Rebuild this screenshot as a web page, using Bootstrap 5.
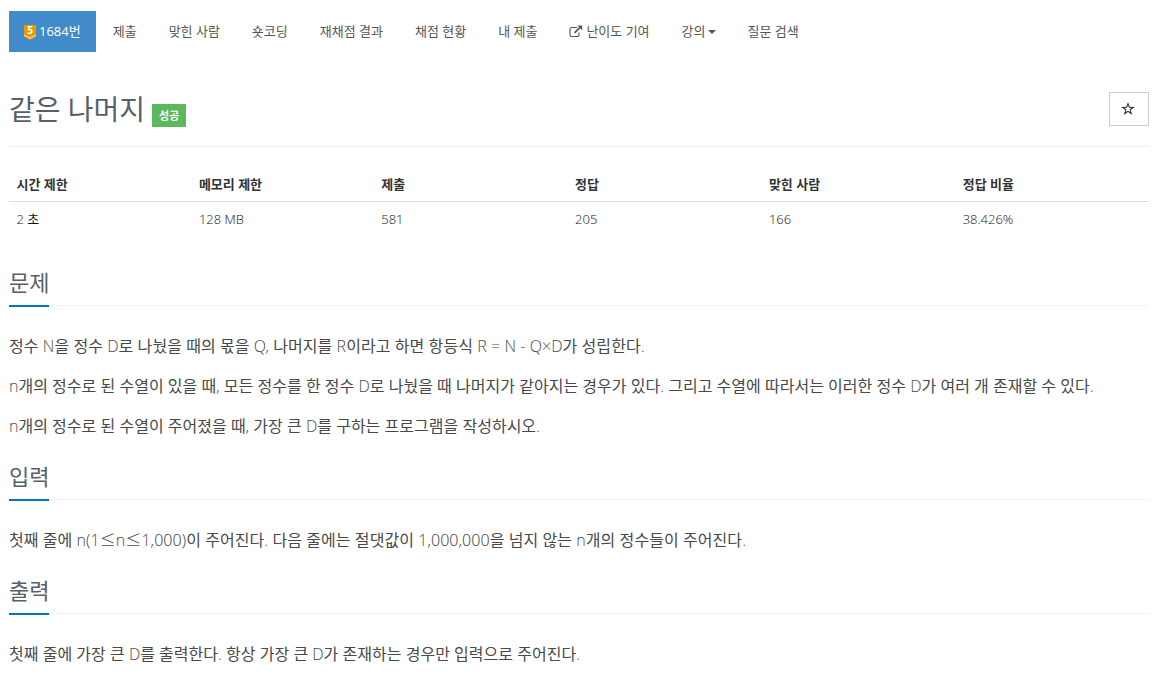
<!DOCTYPE html>
<html lang="ko">
<head>
    <meta charset="UTF-8">
    <meta name="viewport" content="width=device-width, initial-scale=1">
    <title>1684번: 같은 나머지</title>
    <link href="https://cdn.jsdelivr.net/npm/bootstrap@5.3.0/dist/css/bootstrap.min.css" rel="stylesheet">
    <script src="https://cdn.jsdelivr.net/npm/bootstrap@5.3.0/dist/js/bootstrap.bundle.min.js"></script>
    <style>
        body {
            font-family: "Open Sans", "Noto Sans CJK KR", sans-serif;
            font-size: 13px;
            line-height: 20.8px;
            color: #333;
        }
        .page-wrap { padding: 11px 14px 0 9px; }
        .problem-menu { gap: 2px; }
        .problem-menu .nav-link {
            padding: 10px 15px;
            height: 41px;
            line-height: 20px;
            border-radius: 0;
            color: #555;
            white-space: nowrap;
        }
        .problem-menu .nav-link.active { background: #428bca; color: #fff; }
        .tier-icon { width: 12px; height: 15px; margin-right: 3px; margin-top: -4px; vertical-align: -4px; overflow: visible; }
        .link-icon { width: 14px; height: 13px; margin-right: 3px; vertical-align: -2px; }
        .caret-icon { width: 8px; height: 4px; margin-left: 2px; vertical-align: 2px; }
        .page-header { height: 55px; margin-top: 40px; border-bottom: 1px solid #eee; }
        .page-header h1 { font-size: 28px; line-height: 34px; color: #585f69; font-weight: 400; }
        .label-success {
            height: 23px;
            margin: 12px 0 0 7px;
            padding: 0 7px;
            font-size: 11px;
            line-height: 23px;
            font-weight: 700;
            color: #fff;
            background: #5cb85c;
        }
        .star-btn { width: 40px; height: 34px; border: 1px solid #ccc; border-radius: 0; }
        .star-btn svg { margin-right: 2px; }
        #problem-info { margin: 19px 0 0; table-layout: fixed; }
        #problem-info th, #problem-info td { padding: 8px 7.5px; color: #333; line-height: 18.6px; height: 35px; }
        #problem-info th { padding-top: 9px; padding-bottom: 7px; border-bottom: 1px solid #ddd; font-weight: 700; }
        #problem-info td { border: 0; color: #111; font-family: "Open Sans Light", "Open Sans", "Noto Sans CJK KR", sans-serif; }
        .w-limit { width: 16%; }
        .w-count { width: 17%; }
        .problem-first { margin-top: 29px; }
        .headline { height: 41px; margin: 0 0 30px; border-bottom: 1px dotted #e4e9f0; }
        .headline h2 {
            height: 42px;
            font-size: 22px;
            line-height: 35px;
            font-weight: 400;
            color: #585f69;
            border-bottom: 2px solid #0076c0;
        }
        .problem-text {
            padding-bottom: 3px;
            font-family: "Open Sans Light", "Open Sans", "Noto Sans CJK KR", sans-serif;
            font-size: 16px;
            line-height: 20px;
            letter-spacing: .02px;
            color: #484848;
        }
        .problem-text p { height: 20px; margin-bottom: 20px; white-space: nowrap; }
        .problem-text .formula-line { letter-spacing: .07px; }
        .wide-sign { font-family: "Noto Sans CJK KR", sans-serif; font-weight: 300; line-height: 1; }
    </style>
</head>
<body>
    <div class="page-wrap">

        <!-- Problem menu -->
        <ul class="nav nav-pills problem-menu flex-nowrap">
            <li class="nav-item"><a class="nav-link active" href="#"><svg class="tier-icon" viewBox="0 0 12 15"><path d="M0 0h12v11.5L6 15 0 11.5z" fill="#ec9a00"/><path d="M0 10.2l6 3.2 6-3.2" fill="none" stroke="#ffe5b5" stroke-width="1"/><text x="6" y="9.1" text-anchor="middle" font-family="Open Sans" font-size="10" font-weight="700" fill="#fff">5</text></svg>1684번</a></li>
            <li class="nav-item"><a class="nav-link" href="#">제출</a></li>
            <li class="nav-item"><a class="nav-link" href="#">맞힌 사람</a></li>
            <li class="nav-item"><a class="nav-link" href="#">숏코딩</a></li>
            <li class="nav-item"><a class="nav-link" href="#">재채점 결과</a></li>
            <li class="nav-item"><a class="nav-link" href="#">채점 현황</a></li>
            <li class="nav-item"><a class="nav-link" href="#">내 제출</a></li>
            <li class="nav-item"><a class="nav-link" href="#"><svg class="link-icon" viewBox="0 0 14 13"><path d="M8 2.5H2.7A1.7 1.7 0 0 0 1 4.2v5.6a1.7 1.7 0 0 0 1.7 1.7h5.6A1.7 1.7 0 0 0 10 9.8V7.5" fill="none" stroke="#555" stroke-width="1.1"/><path d="M5.5 7.8L11 2.3" stroke="#555" stroke-width="1.8"/><path d="M8.5.5H13.200v4.700z" fill="#555"/></svg>난이도 기여</a></li>
            <li class="nav-item"><a class="nav-link" href="#">강의<svg class="caret-icon" viewBox="0 0 8 4"><path d="M0 0h8L4 4z" fill="#555"/></svg></a></li>
            <li class="nav-item"><a class="nav-link" href="#">질문 검색</a></li>
        </ul>

        <!-- Title -->
        <div class="page-header d-flex align-items-start">
            <h1 class="mb-0">같은 나머지</h1>
            <span class="label-success">성공</span>
            <button type="button" class="btn star-btn ms-auto p-0 d-flex align-items-center justify-content-center" aria-label="즐겨찾기">
                <svg width="14" height="14" viewBox="0 0 14 14"><path d="M7 0l1.700 4.700 5.100.2-4 3.100 1.400 4.900L7 10.100l-4.200 2.800L4.200 8 .2 4.900l5.100-.2zM7 3.300L6 5.800l-2.600.1 2 1.700-.7 2.500L7 8.700l2.300 1.400-.7-2.500 2-1.700L8 5.800z" fill="#333" fill-rule="evenodd"/></svg>
            </button>
        </div>

        <table class="table" id="problem-info">
            <thead>
                <tr>
                    <th class="w-limit">시간 제한</th>
                    <th class="w-limit">메모리 제한</th>
                    <th class="w-count">제출</th>
                    <th class="w-count">정답</th>
                    <th class="w-count">맞힌 사람</th>
                    <th class="w-count">정답 비율</th>
                </tr>
            </thead>
            <tbody>
                <tr>
                    <td>2 초</td>
                    <td>128 MB</td>
                    <td>581</td>
                    <td>205</td>
                    <td>166</td>
                    <td>38.426%</td>
                </tr>
            </tbody>
        </table>

        <!-- Problem body -->
        <section class="problem-first">
            <div class="headline d-flex"><h2 class="mb-0">문제</h2></div>
            <div class="problem-text">
                <p class="formula-line">정수 N을 정수 D로 나눴을 때의 몫을 Q, 나머지를 R이라고 하면 항등식 R = N - Q×D가 성립한다.</p>
                <p>n개의 정수로 된 수열이 있을 때, 모든 정수를 한 정수 D로 나눴을 때 나머지가 같아지는 경우가 있다. 그리고 수열에 따라서는 이러한 정수 D가 여러 개 존재할 수 있다.</p>
                <p>n개의 정수로 된 수열이 주어졌을 때, 가장 큰 D를 구하는 프로그램을 작성하시오.</p>
            </div>
        </section>
        <section>
            <div class="headline d-flex"><h2 class="mb-0">입력</h2></div>
            <div class="problem-text">
                <p class="formula-line">첫째 줄에 n(1<span class="wide-sign">≤</span>n<span class="wide-sign">≤</span>1,000)이 주어진다. 다음 줄에는 절댓값이 1,000,000을 넘지 않는 n개의 정수들이 주어진다.</p>
            </div>
        </section>
        <section>
            <div class="headline d-flex"><h2 class="mb-0">출력</h2></div>
            <div class="problem-text">
                <p>첫째 줄에 가장 큰 D를 출력한다. 항상 가장 큰 D가 존재하는 경우만 입력으로 주어진다.</p>
            </div>
        </section>
    </div>
</body>
</html>
